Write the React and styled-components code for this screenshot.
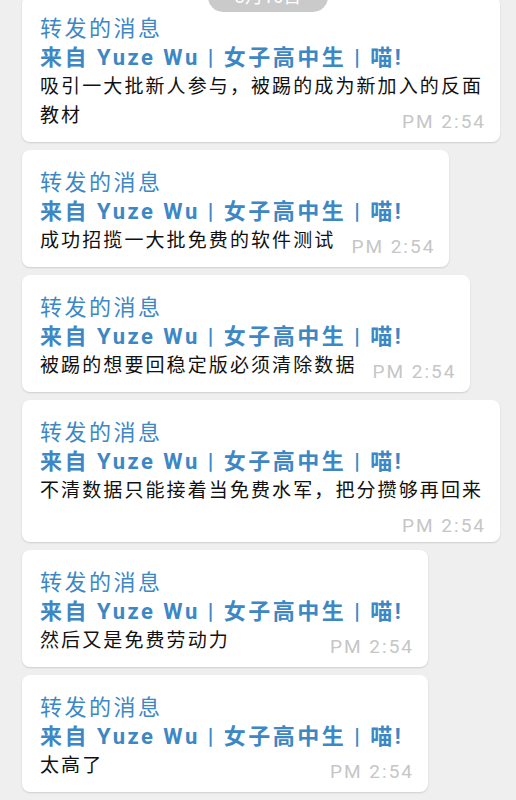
import React from "react";
import styled, { createGlobalStyle } from "styled-components";

const GlobalStyle = createGlobalStyle`
  html, body {
    margin: 0;
    padding: 0;
    background: #efefef;
  }
  body {
    font-family: Roboto, "Noto Sans CJK SC", sans-serif;
  }
`;

const Page = styled.div`
  position: relative;
  width: 516px;
  height: 800px;
  overflow: hidden;
  background: #efefef;
`;

// sticky date header, mostly scrolled off the top
const DatePill = styled.div`
  position: absolute;
  top: -18px;
  left: 208px;
  width: 120px;
  height: 30px;
  border-radius: 15px;
  background: #cacaca;
  color: #ffffff;
  font-size: 18px;
  line-height: 30px;
  text-align: center;
  z-index: 2;
`;

const List = styled.div`
  display: flex;
  flex-direction: column;
  align-items: flex-start;
  gap: 8px;
  margin-top: -4px;
  padding: 0 16px 0 22px;
`;

const Bubble = styled.div`
  box-sizing: border-box;
  min-width: 406px;
  max-width: 478px;
  padding: 18px 14px 12px 18px;
  background: #ffffff;
  border-radius: 8px;
  box-shadow: 0 1px 2px rgba(0, 0, 0, 0.14);
  display: flow-root;
`;

const Forward = styled.div`
  color: #3d87c4;
  font-size: 22px;
  letter-spacing: 2.5px;
  line-height: 29px;
  font-weight: ${(p) => (p.$bold ? 700 : 400)};
  white-space: nowrap;
`;

const Body = styled.div`
  color: #111111;
  font-size: 19px;
  letter-spacing: 2.1px;
  line-height: 29px;
`;

// floats onto the last line when it fits, else drops below
const Time = styled.span`
  float: right;
  margin: 12px 0 -4px 16px;
  color: #c6c6c6;
  font-size: 19px;
  letter-spacing: 2px;
  line-height: 17px;
  white-space: nowrap;
`;

const messages = [
  "吸引一大批新人参与，被踢的成为新加入的反面教材",
  "成功招揽一大批免费的软件测试",
  "被踢的想要回稳定版必须清除数据",
  "不清数据只能接着当免费水军，把分攒够再回来",
  "然后又是免费劳动力",
  "太高了",
];

const Message = ({ text }) => (
  <Bubble>
    <Forward>转发的消息</Forward>
    <Forward $bold>来自 Yuze Wu | 女子高中生 | 喵!</Forward>
    <Body>
      <span>{text}</span>
      <Time>PM 2:54</Time>
    </Body>
  </Bubble>
);

export default function App() {
  return (
    <Page>
      <GlobalStyle />
      <DatePill>3月16日</DatePill>
      <List>
        {messages.map((m, i) => (
          <Message key={i} text={m} />
        ))}
      </List>
    </Page>
  );
}
